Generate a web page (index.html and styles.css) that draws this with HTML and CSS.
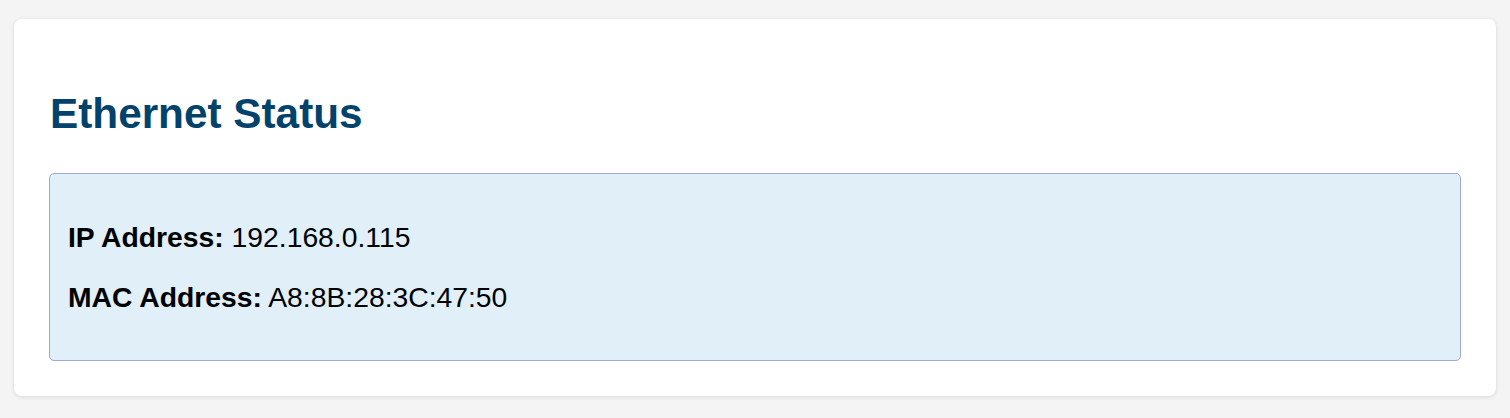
FILE: index.html
```html
<!DOCTYPE html>
<html lang="en">
<head>
<meta charset="utf-8">
<title>Ethernet Status</title>
<link rel="stylesheet" href="styles.css">
</head>
<body>
  <div class="card">
    <h2 class="title">Ethernet Status</h2>
    <div class="info">
      <p class="row"><strong>IP Address:</strong> 192.168.0.115</p>
      <p class="row"><strong>MAC Address:</strong> A8:8B:28:3C:47:50</p>
    </div>
  </div>
</body>
</html>
```
FILE: styles.css
```css
html, body {
  margin: 0;
  background: #f4f4f4;
}
body {
  padding: 19px 14px;
  font-family: "Liberation Sans", Arial, sans-serif;
  color: #000;
}
.card {
  background: #fff;
  border-radius: 8px;
  box-shadow: 0 1px 4px rgba(0, 0, 0, 0.12);
  padding: 35px;
}
.title {
  margin: 35px 0;
  padding-left: 1px;
  font-size: 42.3px;
  line-height: 49px;
  font-weight: bold;
  color: #02426b;
}
.info {
  background: #e1eff9;
  border: 1px solid #9fa8da;
  border-radius: 5px;
  padding: 19px 18px;
}
.row {
  margin: 28px 0;
  font-size: 28.3px;
  line-height: 32px;
}
.row strong {
  font-weight: bold;
}
```
